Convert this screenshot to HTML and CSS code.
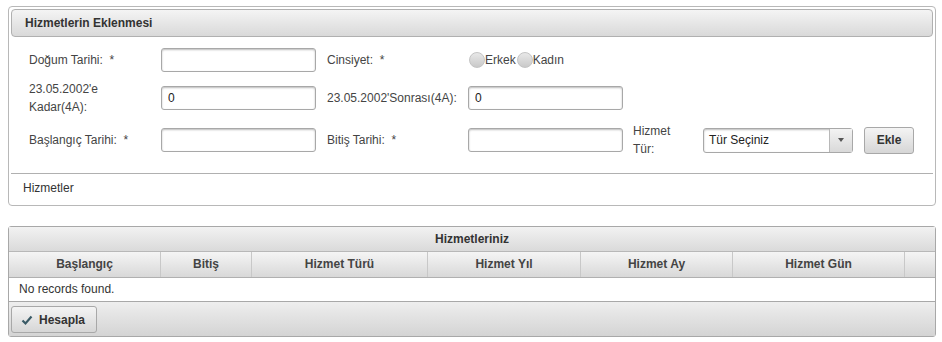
FILE: index.html
```html
<!DOCTYPE html>
<html>
<head>
    <meta charset="utf-8">
    <title>Hizmetlerin Eklenmesi</title>
    <link rel="stylesheet" href="styles.css">
</head>
<body>
    <div class="panel">
        <div class="panel-title">Hizmetlerin Eklenmesi</div>
        <div class="form">
            <div class="row row-one">
                <label class="lbl">Doğum Tarihi:&nbsp; *</label>
                <input type="text" class="field">
                <label class="lbl">Cinsiyet:&nbsp; *</label>
                <div class="radios">
                    <span class="radio"></span><span>Erkek</span>
                    <span class="radio"></span><span>Kadın</span>
                </div>
            </div>
            <div class="row">
                <label class="lbl">23.05.2002'e<br>Kadar(4A):</label>
                <input type="text" class="field" value="0">
                <label class="lbl">23.05.2002'Sonrası(4A):</label>
                <input type="text" class="field" value="0">
            </div>
            <div class="row">
                <label class="lbl">Başlangıç Tarihi:&nbsp; *</label>
                <input type="text" class="field">
                <label class="lbl">Bitiş Tarihi:&nbsp; *</label>
                <input type="text" class="field">
                <label class="lbl">Hizmet<br>Tür:</label>
                <div class="select">
                    <span class="select-label">Tür Seçiniz</span>
                    <span class="select-arrow"><span class="tri"></span></span>
                </div>
                <button class="btn btn-ekle">Ekle</button>
            </div>
        </div>
        <div class="panel-foot">Hizmetler</div>
    </div>

    <div class="grid">
        <div class="grid-title">Hizmetleriniz</div>
        <div class="grid-head">
            <div class="col c1">Başlangıç</div>
            <div class="col c2">Bitiş</div>
            <div class="col c3">Hizmet Türü</div>
            <div class="col c4">Hizmet Yıl</div>
            <div class="col c5">Hizmet Ay</div>
            <div class="col c6">Hizmet Gün</div>
            <div class="col c7"></div>
        </div>
        <div class="grid-body">No records found.</div>
        <div class="grid-foot">
            <button class="btn btn-calc">
                <svg width="12" height="12" viewBox="0 0 12 12"><path d="M1.5 6.5 L4.5 9.5 L10.5 2.5" fill="none" stroke="#3a5a66" stroke-width="2.2"/></svg>
                Hesapla
            </button>
        </div>
    </div>
</body>
</html>
```

FILE: styles.css
```css
body {
    margin: 0;
    padding: 6px 6px 0 8px;
    font-family: "Liberation Sans", Arial, sans-serif;
    font-size: 12px;
    color: #333;
    background: #fff;
}

.panel {
    width: 928px;
    border: 1px solid #b8b8b8;
    border-radius: 4px;
    padding: 2px;
    box-sizing: border-box;
}

.panel-title {
    height: 26px;
    line-height: 26px;
    padding-left: 13px;
    border: 1px solid #b0b0b0;
    border-radius: 4px;
    background: linear-gradient(#f4f4f4, #d9d9d9);
    font-weight: bold;
    color: #333;
}

.form {
    padding: 6px 0 12px 18px;
    border-bottom: 1px solid #b0b0b0;
}

.row {
    display: grid;
    grid-template-columns: 132px 166px 141px 165px 70px 161px 52px;
    align-items: center;
    height: 42px;
}

.row-one {
    height: 34px;
}

.lbl {
    line-height: 18px;
    color: #444;
}

.field {
    width: 155px;
    height: 24px;
    box-sizing: border-box;
    border: 1px solid #a8a8a8;
    border-radius: 3px;
    box-shadow: inset 0 1px 2px #bbb;
    padding: 0 6px;
    font-family: inherit;
    font-size: 12px;
    color: #222;
}

.radios {
    display: flex;
    align-items: center;
    color: #444;
}

.radio {
    width: 16px;
    height: 16px;
    box-sizing: border-box;
    border-radius: 50%;
    border: 1px solid #c4c4c4;
    background: linear-gradient(#e8e8e8, #c9c9c9);
    margin-left: 1px;
}

.select {
    width: 150px;
    height: 25px;
    box-sizing: border-box;
    border: 1px solid #a8a8a8;
    border-radius: 3px;
    box-shadow: inset 0 1px 2px #bbb;
    display: flex;
}

.select-label {
    flex: 1;
    line-height: 23px;
    padding-left: 5px;
    color: #222;
}

.select-arrow {
    width: 22px;
    border-left: 1px solid #b8b8b8;
    background: linear-gradient(#f3f3f3, #d9d9d9);
    display: flex;
    align-items: center;
    justify-content: center;
}

.tri {
    width: 0;
    height: 0;
    border-left: 3px solid transparent;
    border-right: 3px solid transparent;
    border-top: 4px solid #555;
}

.btn {
    font-family: inherit;
    font-size: 12px;
    font-weight: bold;
    color: #333;
    border: 1px solid #a8a8a8;
    border-radius: 3px;
    background: linear-gradient(#f4f4f4, #d6d6d6);
    box-sizing: border-box;
}

.btn-ekle {
    width: 50px;
    height: 27px;
}

.panel-foot {
    padding: 7px 0 8px 12px;
    color: #333;
}

.grid {
    margin-top: 20px;
    width: 928px;
    border: 1px solid #a8a8a8;
    border-radius: 3px;
    box-sizing: border-box;
}

.grid-title {
    height: 24px;
    line-height: 24px;
    text-align: center;
    font-weight: bold;
    background: linear-gradient(#f2f2f2, #dadada);
    border-bottom: 1px solid #b8b8b8;
}

.grid-head {
    display: flex;
    height: 25px;
    border-bottom: 1px solid #b0b0b0;
    background: linear-gradient(#f5f5f5, #d8d8d8);
}

.col {
    line-height: 25px;
    text-align: center;
    font-weight: bold;
    color: #444;
    border-right: 1px solid #c8c8c8;
    box-sizing: border-box;
}

.c1 { width: 152px; }
.c2 { width: 91px; }
.c3 { width: 176px; }
.c4 { width: 153px; }
.c5 { width: 152px; }
.c6 { width: 172px; }
.c7 { flex: 1; border-right: none; }

.grid-body {
    height: 23px;
    line-height: 23px;
    padding-left: 10px;
    border-bottom: 1px solid #a8a8a8;
    color: #333;
}

.grid-foot {
    height: 34px;
    padding: 4px 2px;
    box-sizing: border-box;
    background: linear-gradient(#eeeeee, #d4d4d4);
}

.btn-calc {
    width: 86px;
    height: 27px;
    display: flex;
    align-items: center;
    gap: 6px;
    padding-left: 9px;
}
```
